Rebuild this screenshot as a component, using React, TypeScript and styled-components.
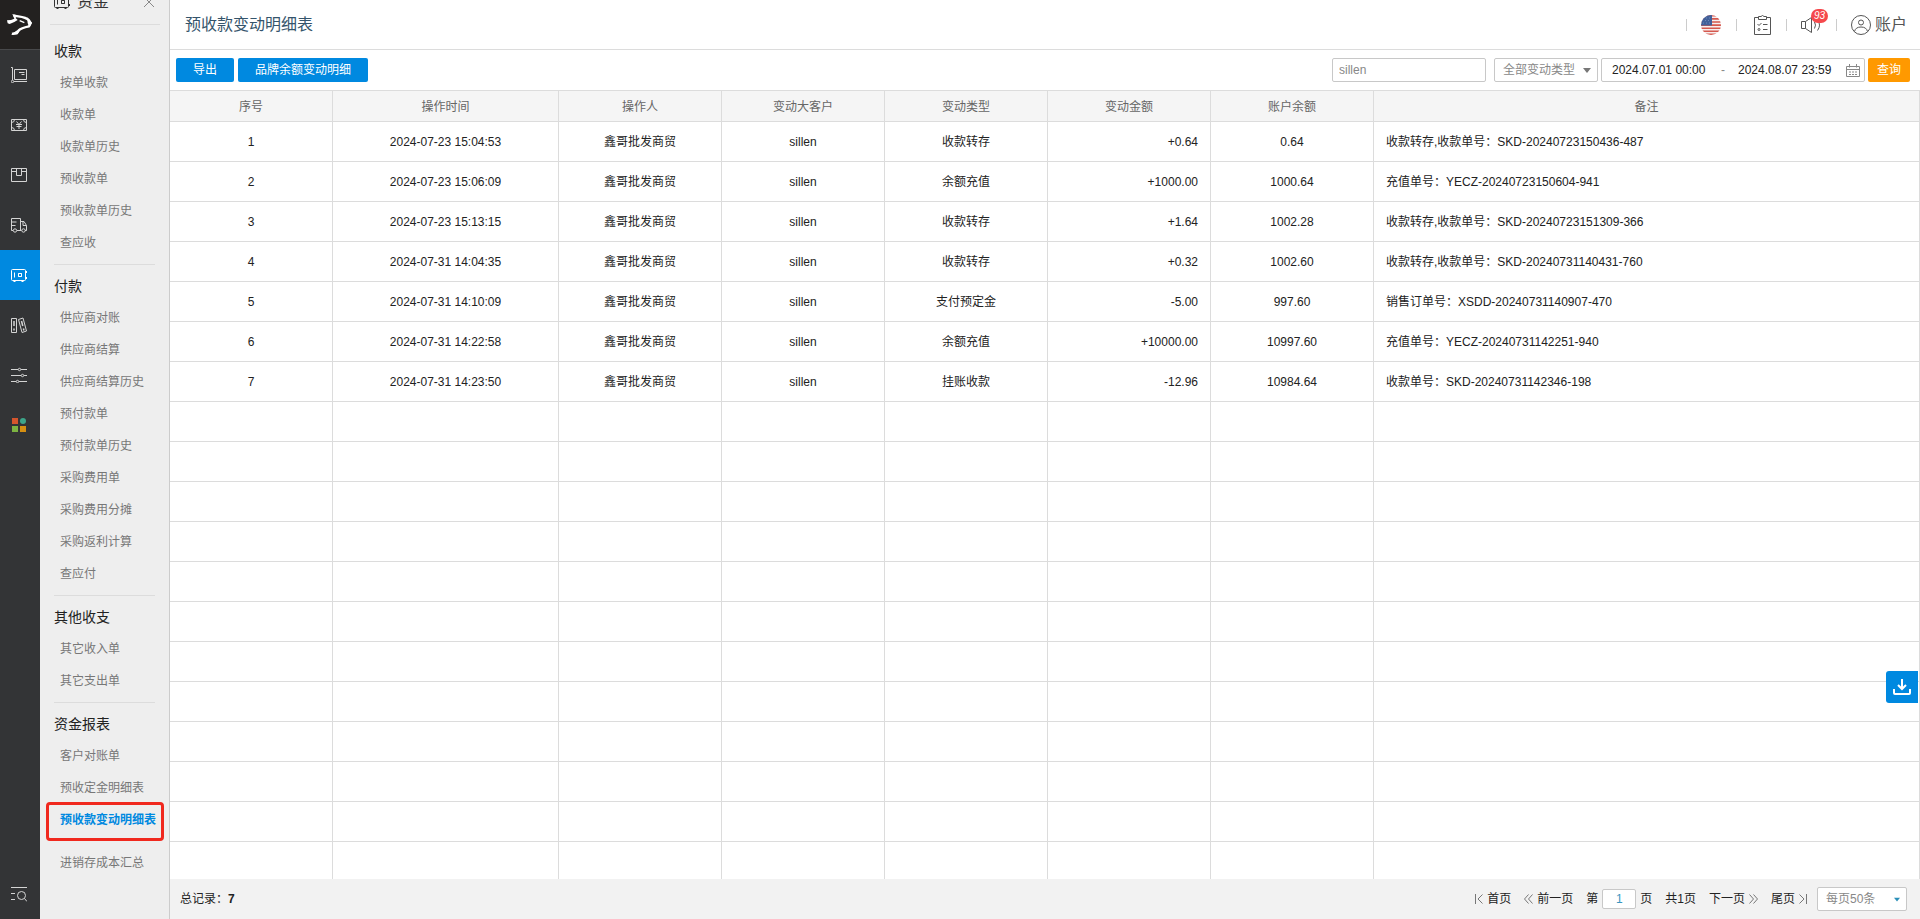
import React from 'react';
import styled, { createGlobalStyle, css } from 'styled-components';

const GlobalStyle = createGlobalStyle`
  *, *::before, *::after { box-sizing: border-box; }
  body {
    margin: 0;
    background: #fff;
    color: #222;
    font: 12px/16px "Liberation Sans", Arial, "Noto Sans CJK SC", sans-serif;
  }
  button, input, select { font: inherit; color: inherit; margin: 0; }
  button { cursor: pointer; }
  a { color: inherit; text-decoration: none; }
  svg { display: block; flex: none; }
`;

const line = '#dcdcdc';
const blue = '#0089e0';

const Shell = styled.div`
  display: flex;
  height: 100vh;
  overflow: hidden;
`;

/* ---------- icon rail ---------- */

const Rail = styled.nav`
  display: flex;
  flex: none;
  flex-direction: column;
  width: 40px;
  background: #333436;
`;

const Logo = styled.a`
  display: flex;
  align-items: center;
  height: 50px;
  padding-left: 7px;
  background: #232120;
  border-bottom: 1px solid #48494b;
`;

const RailLink = styled.a<{ $active?: boolean; $last?: boolean }>`
  display: flex;
  align-items: center;
  height: 50px;
  padding-left: 11px;
  color: ${(p) => (p.$active ? '#fff' : '#d4d4d4')};
  background: ${(p) => (p.$active ? blue : 'transparent')};
  ${(p) => p.$last && css`margin-top: auto;`}
`;

/* ---------- section menu ---------- */

const Menu = styled.aside`
  flex: none;
  width: 130px;
  overflow: hidden;
  background: #eee;
  border-right: 1px solid #ccc;
`;

const MenuHead = styled.div`
  display: flex;
  align-items: center;
  gap: 7px;
  height: 45px;
  margin: -20px 9px 11px 10px;
  padding: 0 6px 0 4px;
  border-bottom: 1px solid ${line};
  color: #333;
  font-size: 16px;
`;

const CloseButton = styled.button`
  margin-left: auto;
  padding: 0;
  border: 0;
  background: none;
  color: #888;
`;

const Group = styled.section`
  margin: 0 14px;
  padding: 6px 0 5px;
  border-bottom: 1px solid ${line};
  &:first-of-type { padding-top: 0; }
  &:last-of-type { border-bottom: 0; }
`;

const GroupTitle = styled.h2`
  margin: 0;
  font-size: 14px;
  font-weight: 400;
  line-height: 30px;
`;

const MenuList = styled.ul`
  margin: 0;
  padding: 1px 0 0 6px;
  list-style: none;
`;

const MenuItem = styled.li<{ $active?: boolean }>`
  position: relative;
  line-height: 32px;
  white-space: nowrap;
  color: #777;
  ${(p) =>
    p.$active &&
    css`
      margin-bottom: 11px;
      color: ${blue};
      font-weight: 700;
      &::before {
        content: '';
        position: absolute;
        inset: -2px -9px -5px -14px;
        border: 3px solid #f0281e;
        border-radius: 4px;
        pointer-events: none;
      }
    `}
`;

/* ---------- main column ---------- */

const Main = styled.main`
  display: flex;
  flex: 1;
  flex-direction: column;
  min-width: 0;
`;

const Header = styled.header`
  display: flex;
  flex: none;
  align-items: center;
  justify-content: space-between;
  height: 50px;
  padding: 0 13px 0 15px;
  border-bottom: 1px solid ${line};
`;

const PageTitle = styled.h1`
  margin: 0;
  color: #34546b;
  font-size: 16px;
  font-weight: 400;
`;

const HeaderTools = styled.div`
  display: flex;
  align-items: center;
`;

const Tool = styled.button<{ $wide?: boolean }>`
  display: flex;
  align-items: center;
  justify-content: center;
  gap: 4px;
  position: relative;
  width: ${(p) => (p.$wide ? 'auto' : '50px')};
  height: 24px;
  padding: ${(p) => (p.$wide ? '0 0 0 15px' : '0')};
  border: 0;
  background: none;
  color: #555;
  font-size: 16px;
  &::before {
    content: '';
    position: absolute;
    left: 0;
    top: 6px;
    height: 12px;
    border-left: 1px solid #ccc;
  }
`;

const Badge = styled.span`
  position: absolute;
  top: -4px;
  left: 25px;
  width: 17px;
  border-radius: 8px;
  background: #f5484c;
  color: #fff;
  font-size: 10px;
  font-style: italic;
  line-height: 14px;
  text-align: center;
`;

const Toolbar = styled.form`
  display: flex;
  flex: none;
  align-items: center;
  height: 40px;
  padding: 0 10px 0 6px;
`;

const Actions = styled.div`
  display: flex;
  gap: 4px;
  margin-right: auto;
`;

const Button = styled.button<{ $tone?: 'search' }>`
  height: 24px;
  padding: 0 ${(p) => (p.$tone ? '9px' : '17px')};
  border: 0;
  border-radius: 2px;
  background: ${(p) => (p.$tone ? '#ff9900' : blue)};
  color: #fff;
  line-height: 24px;
`;

const field = css`
  height: 24px;
  border: 1px solid #c8c8c8;
  border-radius: 2px;
  background: #fff;
`;

const TextField = styled.input`
  ${field}
  width: 154px;
  margin-right: 8px;
  padding: 0 6px;
  color: #888;
`;

const SelectBox = styled.div<{ $width: number }>`
  position: relative;
  width: ${(p) => p.$width}px;
  select {
    ${field}
    display: block;
    width: 100%;
    padding: 0 8px;
    appearance: none;
    color: #888;
  }
  svg {
    position: absolute;
    top: 10px;
    right: 7px;
    pointer-events: none;
  }
`;

const DateRange = styled.div`
  ${field}
  display: flex;
  align-items: center;
  margin: 0 3px;
  padding: 0 4px 0 10px;
  color: #888;
  span { width: 30px; text-align: center; }
  svg { margin-left: 12px; }
`;

const DateInput = styled.input`
  width: 96px;
  padding: 0;
  border: 0;
  color: #222;
`;

/* ---------- data table ---------- */

const TableArea = styled.div`
  flex: 1;
  min-height: 0;
  overflow: hidden;
`;

const Table = styled.table`
  width: 100%;
  table-layout: fixed;
  border-collapse: separate;
  border-spacing: 0;
  border-top: 1px solid ${line};
`;

const Th = styled.th`
  height: 31px;
  padding: 2px 0 0;
  border: solid ${line};
  border-width: 0 1px 1px 0;
  background: #f5f5f5;
  color: #666;
  font-weight: 400;
`;

const Td = styled.td<{ $align?: 'left' | 'right' }>`
  height: 40px;
  padding: 0 12px;
  border: solid ${line};
  border-width: 0 1px 1px 0;
  text-align: ${(p) => p.$align ?? 'center'};
  white-space: nowrap;
`;

const DownloadButton = styled.button`
  display: flex;
  align-items: center;
  justify-content: center;
  position: fixed;
  right: 2px;
  bottom: 216px;
  width: 32px;
  height: 32px;
  padding: 0;
  border: 0;
  border-radius: 3px 0 0 3px;
  background: ${blue};
  color: #fff;
`;

/* ---------- footer ---------- */

const Footer = styled.footer`
  display: flex;
  flex: none;
  align-items: center;
  gap: 10px;
  height: 40px;
  padding: 0 13px 0 10px;
  background: #f2f2f2;
`;

const Total = styled.div`
  margin-right: auto;
`;

const Pager = styled.nav`
  display: flex;
  align-items: center;
  gap: 13px;
`;

const PageLink = styled.a`
  display: flex;
  align-items: center;
  gap: 4px;
  svg { color: #777; }
`;

const PageJump = styled.label`
  display: flex;
  align-items: center;
  gap: 4px;
  input {
    width: 34px;
    height: 20px;
    padding: 0;
    border: 1px solid #c8c8c8;
    border-radius: 2px;
    background: #fff;
    color: #3a96c0;
    text-align: center;
  }
`;

/* ---------- icons ---------- */

type IconProps = { w?: number; h?: number; sw?: number; children: React.ReactNode };

const Icon = ({ w = 16, h = 16, sw = 1, children }: IconProps) => (
  <svg width={w} height={h} viewBox={`0 0 ${w} ${h}`} fill="none" stroke="currentColor" strokeWidth={sw} aria-hidden="true">
    {children}
  </svg>
);

const LogoMark = () => (
  <svg width="25" height="21" viewBox="0 0 75 63" fill="none" stroke="#fff" strokeLinejoin="round" aria-hidden="true">
    <path d="M20 5 L34 7 Q58 10 66 19 L71 27 L66 37 Q42 42 35 49 L29 57 L15 60" strokeWidth="7" />
    <path d="M0 19 L12 18 L22 14 L16 0 L30 4 L26 12 L32 18 L22 24 L8 30 L2 28 Z M60 10 L75 26 L68 40 L62 28 Z M12 62 L32 61 L40 48 L28 50 Z" fill="#fff" stroke="none" />
    <path d="M38 20 L52 26" strokeWidth="4" />
  </svg>
);

const ScaleIcon = () => (
  <Icon>
    <path d="M0 .5h1.500v12.500M3 14.500H16M3.500 2.500h12v10h-12zM8 5.500h5.500M10.500 7.500h3" />
    <circle cx="1.500" cy="14.500" r="1.200" />
  </Icon>
);

const CashIcon = () => (
  <Icon>
    <path d="M.5 2.500h15v11H.5zM.5 5.500q3 0 3-3M12.500 2.500q0 3 3 3M15.500 10.500q-3 0-3 3M3.500 13.500q0-3-3-3" />
    <path d="M5.500 4.500L8 7.500l2.500-3M5 7.500h6M5.500 9.500h5M8 7.500v4.500" />
  </Icon>
);

const BoxIcon = () => (
  <Icon>
    <path d="M.5 1.500h15v13H.5zM.5 4.500h5M10.500 4.500h5M5.500 1.500v7h5v-7" />
  </Icon>
);

const TruckIcon = () => (
  <Icon>
    <path d="M2 13.500H.5V1.500h9v12M.5 5h5M.5 8.500h4M6 13.500h4.500M9.500 4.500h3.500l2.500 4v5h-1.500M12 4.500v4h3.500" />
    <circle cx="4" cy="13.500" r="1.700" />
    <circle cx="12.500" cy="13.500" r="1.700" />
  </Icon>
);

const SafeIcon = () => (
  <Icon>
    <path d="M1.500 2.500h12q1 0 1 1v9q0 1-1 1h-12q-1 0-1-1v-9q0-1 1-1zM3.500 5.500v5M7.500 6.500h3v3h-3zM15.500 4v2M15.500 10v2M2.500 14.500h2M10.500 14.500h2M7 6l.5.5M11 6l-.5.5M7 10l.5-.5M11 10l-.5-.5" />
  </Icon>
);

const BinderIcon = () => (
  <Icon>
    <path d="M.5 1.500h5v14h-5zM7.500 2.500l4.500-1.500 3.500 13-4.500 1.500z" />
    <path d="M3 4v5M3 11.500v2M10.500 4l1.300 5M12.400 11.500l.5 2" strokeWidth="1.500" />
  </Icon>
);

const SliderIcon = () => (
  <Icon>
    <path d="M0 2.500h7M10 2.500h6M0 8.500h10M13 8.500h3M0 14.500h5M8 14.500h8" />
    <circle cx="8.500" cy="2.500" r="1.200" />
    <circle cx="11.500" cy="8.500" r="1.200" />
    <circle cx="6.500" cy="14.500" r="1.200" />
  </Icon>
);

const AppsIcon = () => (
  <svg width="16" height="16" viewBox="0 0 16 16" aria-hidden="true">
    <path fill="#d4552d" d="M1 1h6v6H1z" />
    <circle cx="12" cy="4" r="3" fill="#3da58a" />
    <path fill="#7cb342" d="M1 9h6v6H1z" />
    <path fill="#d68f12" d="M9 9h6v6H9z" />
  </svg>
);

const ListSearchIcon = () => (
  <Icon>
    <path d="M0 1.500h16M0 7.500h4M0 13.500h4M13.500 12.500l2.500 3" />
    <circle cx="10.500" cy="9.500" r="4" />
  </Icon>
);

const FlagIcon = () => (
  <svg width="20" height="20" viewBox="0 0 20 20" aria-hidden="true">
    <clipPath id="flag-round"><circle cx="10" cy="10" r="10" /></clipPath>
    <g clipPath="url(#flag-round)">
      <path fill="#f7eeee" d="M0 0h20v20H0z" />
      <path stroke="#d5584e" strokeWidth="1.600" d="M0 .8h20M0 3.900h20M0 7h20M0 10.100h20M0 13.200h20M0 16.300h20M0 19.300h20" />
      <path fill="#42609a" d="M0 0h11v10.500H0z" />
      <path stroke="#6f88b8" strokeWidth="1" strokeDasharray="1 2" d="M2 3h9M1 5.500h9M2 8h9" />
    </g>
  </svg>
);

const ClipboardIcon = () => (
  <Icon w={20} h={20}>
    <path d="M7.500 2.500h-4v17h16v-17h-4M7.500 4.500v-3h2.500q1.500-2 3 0h2.500v3zM6.500 9l1.500 1.500L10.500 8M12 9.500h4.500M12 14.500h4.500" />
    <circle cx="8" cy="14.500" r="1" />
  </Icon>
);

const SpeakerIcon = () => (
  <Icon w={20} h={18}>
    <path d="M.5 5.500h4v7h-4zM4.500 5.500l6-4v15l-6-4M13.500 6q2 3 0 6.500M16.500 4q4 5 0 10.500" />
  </Icon>
);

const UserIcon = () => (
  <Icon w={20} h={20}>
    <circle cx="10" cy="10" r="9.500" />
    <circle cx="10" cy="7.500" r="2.500" />
    <path d="M3.500 16.500q1-4.500 6.500-4.500t6.500 4.500" />
  </Icon>
);

const CalendarIcon = () => (
  <Icon w={14} h={13}>
    <path d="M.5 2.500h13v10H.5zM.5 5.500h13M3.500 0v3.500M10.500 0v3.500M3 8h2M6 8h2M9 8h2M3 10.500h2M6 10.500h2M9 10.500h2" />
  </Icon>
);

const DownloadIcon = () => (
  <Icon w={18} h={18} sw={2}>
    <path d="M9 1v10M5 7l4 4 4-4M1 11v4q0 1 1 1h14q1 0 1-1v-4" />
  </Icon>
);

const CloseIcon = () => (
  <Icon w={10} h={10}><path d="M0 0l10 10M10 0L0 10" /></Icon>
);

const Arrow = ({ w, color }: { w: number; color: string }) => (
  <svg width={w} height="5" viewBox="0 0 8 5" aria-hidden="true">
    <path d="M0 0h8L4 5z" fill={color} />
  </svg>
);

/* ---------- data ---------- */

const railItems = [
  { label: '销售', icon: <ScaleIcon /> },
  { label: '采购', icon: <CashIcon /> },
  { label: '库存', icon: <BoxIcon /> },
  { label: '配送', icon: <TruckIcon /> },
  { label: '资金', icon: <SafeIcon />, active: true },
  { label: '资料', icon: <BinderIcon /> },
  { label: '设置', icon: <SliderIcon /> },
  { label: '应用', icon: <AppsIcon /> },
];

const current = '预收款变动明细表';

const groups = [
  { title: '收款', items: ['按单收款', '收款单', '收款单历史', '预收款单', '预收款单历史', '查应收'] },
  {
    title: '付款',
    items: ['供应商对账', '供应商结算', '供应商结算历史', '预付款单', '预付款单历史', '采购费用单', '采购费用分摊', '采购返利计算', '查应付'],
  },
  { title: '其他收支', items: ['其它收入单', '其它支出单'] },
  { title: '资金报表', items: ['客户对账单', '预收定金明细表', current, '进销存成本汇总'] },
];

const columns: { name: string; width?: number; align?: 'left' | 'right' }[] = [
  { name: '序号', width: 163 },
  { name: '操作时间', width: 226 },
  { name: '操作人', width: 163 },
  { name: '变动大客户', width: 163 },
  { name: '变动类型', width: 163 },
  { name: '变动金额', width: 163, align: 'right' },
  { name: '账户余额', width: 163 },
  { name: '备注', align: 'left' },
];

const shop = '鑫哥批发商贸';

const rows = [
  ['1', '2024-07-23 15:04:53', shop, 'sillen', '收款转存', '+0.64', '0.64', '收款转存,收款单号：SKD-20240723150436-487'],
  ['2', '2024-07-23 15:06:09', shop, 'sillen', '余额充值', '+1000.00', '1000.64', '充值单号：YECZ-20240723150604-941'],
  ['3', '2024-07-23 15:13:15', shop, 'sillen', '收款转存', '+1.64', '1002.28', '收款转存,收款单号：SKD-20240723151309-366'],
  ['4', '2024-07-31 14:04:35', shop, 'sillen', '收款转存', '+0.32', '1002.60', '收款转存,收款单号：SKD-20240731140431-760'],
  ['5', '2024-07-31 14:10:09', shop, 'sillen', '支付预定金', '-5.00', '997.60', '销售订单号：XSDD-20240731140907-470'],
  ['6', '2024-07-31 14:22:58', shop, 'sillen', '余额充值', '+10000.00', '10997.60', '充值单号：YECZ-20240731142251-940'],
  ['7', '2024-07-31 14:23:50', shop, 'sillen', '挂账收款', '-12.96', '10984.64', '收款单号：SKD-20240731142346-198'],
];

const blankRows = Array.from({ length: 12 }, () => columns.map(() => ''));

export default function App() {
  return (
    <Shell>
      <GlobalStyle />
      <Rail>
        <Logo href="#home" aria-label="首页"><LogoMark /></Logo>
        {railItems.map((item) => (
          <RailLink key={item.label} href="#module" aria-label={item.label} $active={item.active}>
            {item.icon}
          </RailLink>
        ))}
        <RailLink href="#search" aria-label="搜索菜单" $last><ListSearchIcon /></RailLink>
      </Rail>

      <Menu>
        <MenuHead>
          <SafeIcon />
          资金
          <CloseButton type="button" aria-label="关闭"><CloseIcon /></CloseButton>
        </MenuHead>
        {groups.map((group) => (
          <Group key={group.title}>
            <GroupTitle>{group.title}</GroupTitle>
            <MenuList>
              {group.items.map((item) => (
                <MenuItem key={item} $active={item === current}>
                  <a href="#report">{item}</a>
                </MenuItem>
              ))}
            </MenuList>
          </Group>
        ))}
      </Menu>

      <Main>
        <Header>
          <PageTitle>{current}</PageTitle>
          <HeaderTools>
            <Tool type="button" aria-label="语言"><FlagIcon /></Tool>
            <Tool type="button" aria-label="任务"><ClipboardIcon /></Tool>
            <Tool type="button" aria-label="通知">
              <SpeakerIcon />
              <Badge>93</Badge>
            </Tool>
            <Tool type="button" $wide><UserIcon />账户</Tool>
          </HeaderTools>
        </Header>

        <Toolbar onSubmit={(e) => e.preventDefault()}>
          <Actions>
            <Button type="button">导出</Button>
            <Button type="button">品牌余额变动明细</Button>
          </Actions>
          <TextField aria-label="客户" defaultValue="sillen" />
          <SelectBox $width={104}>
            <select aria-label="变动类型"><option>全部变动类型</option></select>
            <Arrow w={8} color="#777" />
          </SelectBox>
          <DateRange>
            <DateInput aria-label="开始时间" defaultValue="2024.07.01 00:00" />
            <span>-</span>
            <DateInput aria-label="结束时间" defaultValue="2024.08.07 23:59" />
            <CalendarIcon />
          </DateRange>
          <Button type="submit" $tone="search">查询</Button>
        </Toolbar>

        <TableArea>
          <Table>
            <colgroup>
              {columns.map((c) => <col key={c.name} width={c.width} />)}
            </colgroup>
            <thead>
              <tr>{columns.map((c) => <Th key={c.name} scope="col">{c.name}</Th>)}</tr>
            </thead>
            <tbody>
              {[...rows, ...blankRows].map((row, r) => (
                <tr key={r}>
                  {row.map((cell, i) => <Td key={i} $align={columns[i].align}>{cell}</Td>)}
                </tr>
              ))}
            </tbody>
          </Table>
        </TableArea>

        <Footer>
          <Total>总记录：<b>7</b></Total>
          <Pager aria-label="分页">
            <PageLink href="#first">
              <Icon w={8} h={10}><path d="M.5 0v10M7.500 .5L3 5l4.500 4.500" /></Icon>首页
            </PageLink>
            <PageLink href="#prev">
              <Icon w={9} h={10}><path d="M4.500 .5L.5 5l4 4.500M8.500 .5L4.500 5l4 4.500" /></Icon>前一页
            </PageLink>
            <PageJump>第<input aria-label="页码" defaultValue="1" />页</PageJump>
            <span>共1页</span>
            <PageLink href="#next">
              下一页<Icon w={9} h={10}><path d="M.5 .5l4 4.500-4 4.500M4.500 .5l4 4.500-4 4.500" /></Icon>
            </PageLink>
            <PageLink href="#last">
              尾页<Icon w={8} h={10}><path d="M7.500 0v10M.5 .5L5 5 .5 9.500" /></Icon>
            </PageLink>
          </Pager>
          <SelectBox $width={90}>
            <select aria-label="每页条数"><option>每页50条</option></select>
            <Arrow w={6} color="#2a8fb8" />
          </SelectBox>
        </Footer>
      </Main>

      <DownloadButton type="button" aria-label="下载"><DownloadIcon /></DownloadButton>
    </Shell>
  );
}
